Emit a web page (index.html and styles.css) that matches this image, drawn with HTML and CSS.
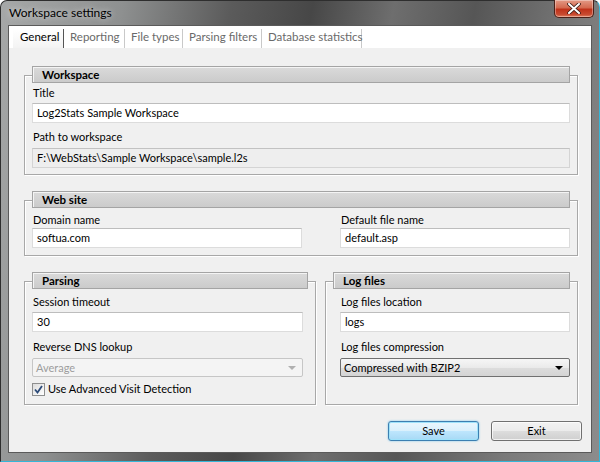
FILE: index.html
```html
<!DOCTYPE html>
<html>
<head>
<meta charset="utf-8">
<title>Workspace settings</title>
<link rel="stylesheet" href="styles.css">
</head>
<body>
<div class="window">
  <div class="titlebar">
    <span class="title">Workspace settings</span>
    <div class="close">
      <svg width="14" height="11" viewBox="0 0 14 11"><path d="M2 1 L12 10 M12 1 L2 10" stroke="#3a1a14" stroke-width="3.6" stroke-linecap="round"/><path d="M2 1 L12 10 M12 1 L2 10" stroke="#ffffff" stroke-width="2" stroke-linecap="round"/></svg>
    </div>
  </div>
  <div class="client">
    <div class="tabs">
      <div class="tab active t1">General</div>
      <div class="tab t2">Reporting</div>
      <div class="tab t3">File types</div>
      <div class="tab t4">Parsing filters</div>
      <div class="tab t5">Database statistics</div>
    </div>
    <div class="page">
      <section class="group g-workspace">
        <div class="ghead">Workspace</div>
        <div class="lbl first">Title</div>
        <div class="input">Log2Stats Sample Workspace</div>
        <div class="lbl">Path to workspace</div>
        <div class="input ro">F:\WebStats\Sample Workspace\sample.l2s</div>
      </section>
      <section class="group g-web">
        <div class="ghead">Web site</div>
        <div class="cols">
          <div class="field">
            <div class="lbl first">Domain name</div>
            <div class="input">softua.com</div>
          </div>
          <div class="field">
            <div class="lbl first">Default file name</div>
            <div class="input">default.asp</div>
          </div>
        </div>
      </section>
      <div class="row2">
        <section class="group g-parsing">
          <div class="ghead">Parsing</div>
          <div class="lbl first">Session timeout</div>
          <div class="input w-left">30</div>
          <div class="lbl">Reverse DNS lookup</div>
          <div class="select disabled w-left"><span>Average</span><span class="arrow"></span></div>
          <div class="check">
            <span class="box"><svg width="9" height="9" viewBox="0 0 9 9"><path d="M1 4.5 L3.5 7.5 L8 1" fill="none" stroke="#2b4a78" stroke-width="1.8"/></svg></span>
            <span>Use Advanced Visit Detection</span>
          </div>
        </section>
        <section class="group g-logs">
          <div class="ghead">Log files</div>
          <div class="lbl first indent">Log files location</div>
          <div class="input w-right">logs</div>
          <div class="lbl indent">Log files compression</div>
          <div class="select w-right"><span>Compressed with BZIP2</span><span class="arrow"></span></div>
        </section>
      </div>
      <div class="buttons">
        <div class="btn default">Save</div>
        <div class="btn">Exit</div>
      </div>
    </div>
  </div>
</div>
</body>
</html>
```

FILE: styles.css
```css
* { box-sizing: border-box; }
html, body { margin: 0; padding: 0; }
body {
  width: 600px;
  height: 462px;
  overflow: hidden;
  background: #ffffff;
  font-family: Lato, "Liberation Sans", sans-serif;
  font-size: 11px;
  color: #000;
}
.window {
  width: 600px;
  height: 462px;
  padding: 0 7px 8px 7px;
  border: 1px solid #2e2e2e;
  border-right-color: #35b6d8;
  border-bottom-color: #35b6d8;
  border-radius: 7px 7px 0 0;
  background:
    linear-gradient(100deg, #a6a8a8 0%, #8e9090 18%, #5b5b5b 34%, #474747 46%, #6e6e6e 58%, #565656 70%, #7a7a7a 86%, #8c8c8c 100%);
  display: flex;
  flex-direction: column;
}
.titlebar {
  height: 24px;
  display: flex;
  justify-content: space-between;
  align-items: flex-start;
}
.title {
  margin: 4px 0 0 1px;
  font-size: 12px;
  line-height: 16px;
  color: #000;
  text-shadow: 0 0 6px rgba(255,255,255,0.7);
}
.close {
  width: 40px;
  height: 18px;
  margin-right: -2px;
  margin-top: -1px;
  border: 1px solid #4a2018;
  border-top: none;
  border-radius: 0 0 5px 5px;
  background: linear-gradient(#e39a86 0%, #d46a50 45%, #c0321a 55%, #c84a30 85%, #e08060 100%);
  box-shadow: inset 0 0 0 1px rgba(255,255,255,0.35);
  display: flex;
  align-items: center;
  justify-content: center;
}
.client {
  flex: 1;
  border: 1px solid #5a5a5a;
  background: #f0f0f0;
  display: flex;
  flex-direction: column;
}
.tabs {
  height: 22px;
  background: #fff;
  display: flex;
  padding-left: 4px;
  align-items: flex-end;
}
.tab {
  height: 19px;
  line-height: 16px;
  padding-left: 6px;
  color: #6a6a6a;
  border-right: 1px solid #c9c9c9;
  font-size: 11.5px;
  white-space: nowrap;
}
.tab.active {
  color: #000;
  background: linear-gradient(#ffffff, #f3f3f3);
  border-right: 1px solid #555;
  padding-left: 7px;
}
.t1 { width: 51px; }
.t2 { width: 61px; }
.t3 { width: 58px; }
.t4 { width: 79px; }
.t5 { width: 100px; }
.page {
  flex: 1;
  padding: 0 13px 0 15px;
  display: flex;
  flex-direction: column;
}
.group {
  border: 1px solid #a8a8a8;
  box-shadow: inset 1px 1px 0 #ffffff, 1px 1px 0 #ffffff;
  padding: 0 7px;
  display: flex;
  flex-direction: column;
}
.ghead {
  margin-top: -10px;
  height: 17px;
  line-height: 15px;
  padding-left: 9px;
  font-weight: bold;
  font-size: 11.5px;
  border: 1px solid #a4a4a4;
  box-shadow: inset 1px 1px 0 #f4f4f4;
  background: linear-gradient(#dadada, #cbcbcb);
}
.lbl {
  line-height: 14px;
  margin-top: 7px;
  margin-bottom: 4px;
  padding-left: 1px;
  white-space: nowrap;
}
.lbl.first { margin-top: 3px; margin-bottom: 3px; }
.input {
  height: 20px;
  line-height: 18px;
  padding-left: 4px;
  background: #fff;
  border: 1px solid #dcdcdc;
  border-top-color: #bdbdbd;
  white-space: nowrap;
}
.input.ro {
  background: #eeeeee;
  border-color: #d4d4d4;
  border-top-color: #c2c2c2;
}
.g-workspace { margin-top: 27px; padding-bottom: 6px; }
.g-web { margin-top: 25px; padding-bottom: 7px; }
.g-web .lbl.first { margin-top: 5px; margin-bottom: 1px; }
.cols {
  display: grid;
  grid-template-columns: 270px 230px;
  column-gap: 38px;
}
.row2 {
  margin-top: 25px;
  display: flex;
  gap: 9px;
}
.g-parsing { width: 292px; padding-bottom: 8px; }
.g-logs { width: 253px; }
.g-parsing .lbl.first, .g-logs .lbl.first { margin-top: 6px; margin-bottom: 3px; }
.g-parsing .lbl, .g-logs .lbl { margin-top: 8px; margin-bottom: 4px; }
.w-left { width: 271px; }
.w-right { width: 230px; margin-left: 7px; }
.indent { margin-left: 7px; }
.select {
  height: 19px;
  line-height: 17px;
  padding-left: 3px;
  display: flex;
  justify-content: space-between;
  align-items: center;
  border: 1px solid #707070;
  border-radius: 2px;
  background: linear-gradient(#f6f6f6 0%, #eaeaea 50%, #dddddd 51%, #d4d4d4 100%);
}
.select .arrow {
  width: 0;
  height: 0;
  margin-right: 6px;
  border-left: 4px solid transparent;
  border-right: 4px solid transparent;
  border-top: 4px solid #000;
}
.select.disabled {
  color: #9d9d9d;
  border-color: #c6c6c6;
  background: #f4f4f4;
}
.select.disabled .arrow { border-top-color: #b0b0b0; }
.check {
  margin-top: 5px;
  display: flex;
  align-items: center;
  gap: 3px;
  line-height: 14px;
}
.check .box {
  width: 13px;
  height: 13px;
  border: 1px solid #8e8f8f;
  background: linear-gradient(135deg, #dcdcdc, #ffffff);
  display: flex;
  align-items: center;
  justify-content: center;
}
.buttons {
  margin-top: 16px;
  margin-right: -4px;
  display: flex;
  justify-content: flex-end;
  gap: 12px;
}
.btn {
  width: 91px;
  height: 20px;
  line-height: 18px;
  text-align: center;
  border: 1px solid #707070;
  border-radius: 3px;
  background: linear-gradient(#f2f2f2 0%, #ebebeb 50%, #dddddd 51%, #cfcfcf 100%);
  box-shadow: inset 0 0 0 1px rgba(255,255,255,0.7);
}
.btn.default {
  border-color: #3c7fb1;
  background: linear-gradient(#eaf6fd 0%, #d9f0fc 50%, #bee6fd 51%, #a7d9f5 100%);
  box-shadow: inset 0 0 0 1px #9ee2fa, 0 0 2px #6cc3ec;
}
```
